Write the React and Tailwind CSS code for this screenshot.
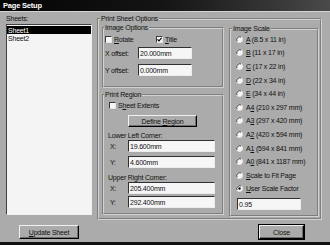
import { useState } from 'react'

function U({ children }) {
  return <span className="underline underline-offset-[1px]">{children}</span>
}

function Check({ checked, label }) {
  return (
    <span className="flex items-center gap-[2px]">
      <span className="w-[7px] h-[7px] bg-[#f6f6f6] border border-t-[#3a3a3a] border-l-[#3a3a3a] border-b-[#e4e4e4] border-r-[#e4e4e4] flex items-center justify-center">
        {checked && (
          <svg width="5" height="5" viewBox="0 0 5 5">
            <path d="M0.5 2.3 L2 3.8 L4.6 0.8" stroke="#000" strokeWidth="1.2" fill="none" />
          </svg>
        )}
      </span>
      <span>{label}</span>
    </span>
  )
}

function Radio({ checked, children }) {
  return (
    <div className="h-[13.6px] flex items-center gap-[3px] pl-[5px]">
      <svg width="7" height="7" viewBox="0 0 7 7" className="shrink-0">
        <circle cx="3.5" cy="3.5" r="3" fill="#f6f6f6" stroke="#e8e8e8" strokeWidth="1" />
        <path d="M1 5 A3 3 0 0 1 5 1" stroke="#3a3a3a" strokeWidth="1" fill="none" />
        {checked && <circle cx="3.5" cy="3.5" r="1.2" fill="#000" />}
      </svg>
      <span>{children}</span>
    </div>
  )
}

function Field({ value, className }) {
  return (
    <div className={`h-[12px] bg-[#f6f6f6] border border-t-[#303030] border-l-[#303030] border-b-[#ececec] border-r-[#ececec] flex items-center pl-[1px] ${className}`}>
      {value}
    </div>
  )
}

function Btn({ children, className }) {
  return (
    <div className={`flex items-center justify-center border border-t-[#f0f0f0] border-l-[#f0f0f0] border-b-black border-r-black shadow-[inset_-1px_-1px_0_#6e6e6e] ${className}`}>
      {children}
    </div>
  )
}

const scales = [
  [<U key="a">A</U>, ' (8.5 x 11 in)'],
  [<U key="b">B</U>, ' (11 x 17 in)'],
  [<U key="c">C</U>, ' (17 x 22 in)'],
  [<U key="d">D</U>, ' (22 x 34 in)'],
  [<U key="e">E</U>, ' (34 x 44 in)'],
  [<>A<U>4</U></>, ' (210 x 297 mm)'],
  [<>A<U>3</U></>, ' (297 x 420 mm)'],
  [<>A<U>2</U></>, ' (420 x 594 mm)'],
  [<>A<U>1</U></>, ' (594 x 841 mm)'],
  [<>A<U>0</U></>, ' (841 x 1187 mm)'],
]

export default function App() {
  const [sheet] = useState(0)
  const group = 'border-2 [border-style:groove] border-[#d2d2d2] min-w-0'

  return (
    <div className="w-[330px] h-[245px] bg-[#ababab] flex flex-col overflow-hidden border-b-[3px] border-[#111] font-['Liberation_Sans',Arial,sans-serif] text-[7px] tracking-[-0.2px] leading-[7px] text-[#111]">
      <div className="h-[11px] shrink-0 bg-gradient-to-r from-[#050505] via-[#151515] to-[#4a4a4a] text-white font-bold text-[7.5px] flex items-center pl-[3px]">
        Page Setup
      </div>
      <div className="h-px shrink-0 bg-[#d4d4d4]" />
      <div className="flex flex-1 min-h-0">
        <div className="w-[95px] shrink-0 pl-[6px] flex flex-col">
          <div className="pt-[3px]">Sheets:</div>
          <div className="mt-[2px] h-[191px] w-[86px] bg-[#f4f4f4] border border-t-[#404040] border-l-[#404040] border-b-[#f0f0f0] border-r-[#f0f0f0] pt-[1px]">
            {['Sheet1', 'Sheet2'].map((s, i) => (
              <div key={s} className={`h-[8px] flex items-center pl-[1px] ${i === sheet ? 'bg-black text-white' : ''}`}>
                {s}
              </div>
            ))}
          </div>
          <Btn className="mt-[10px] ml-[13px] w-[60px] h-[14px]">
            <span><U>U</U>pdate Sheet</span>
          </Btn>
        </div>

        <div className="flex-1 pl-[2px] flex flex-col">
          <fieldset className={`${group} mt-[3px] w-[225px] h-[205px] flex`}>
            <legend className="px-[1px] ml-[1px]">Print Sheet Options</legend>
            <div className="flex gap-[5px] ml-[3px]">
              <div className="w-[122px] flex flex-col">
                <fieldset className={`${group} mt-[2px] h-[64px]`}>
                  <legend className="px-[1px]">Image Options</legend>
                  <div className="mt-[4px] h-[8px] flex items-center pl-[1px]">
                    <div className="w-[51px]"><Check label={<><U>R</U>otate</>} /></div>
                    <Check checked label={<><U>T</U>itle</>} />
                  </div>
                  <div className="mt-[4px] flex items-center">
                    <span className="w-[34px] pl-[1px]">X offset:</span>
                    <Field value="20.000mm" className="w-[54px]" />
                  </div>
                  <div className="mt-[5px] flex items-center">
                    <span className="w-[34px] pl-[1px]">Y offset:</span>
                    <Field value="0.000mm" className="w-[54px]" />
                  </div>
                </fieldset>
                <fieldset className={`${group} mt-[3px] h-[124px]`}>
                  <legend className="px-[1px]">Print Region</legend>
                  <div className="mt-[3px] h-[8px] flex items-center pl-[5px]">
                    <Check label={<>S<U>h</U>eet Extents</>} />
                  </div>
                  <Btn className="mt-[6px] ml-[24px] w-[69px] h-[12px]">
                    <span>Define <U>R</U>egion</span>
                  </Btn>
                  <div className="mt-[5px] pl-[4px]">Lower Left Corner:</div>
                  <div className="mt-[1px] flex items-center">
                    <span className="w-[24px] pl-[6px]">X:</span>
                    <Field value="19.600mm" className="w-[87px]" />
                  </div>
                  <div className="mt-[4px] flex items-center">
                    <span className="w-[24px] pl-[6px]">Y:</span>
                    <Field value="4.600mm" className="w-[87px]" />
                  </div>
                  <div className="mt-[6px] pl-[4px]">Upper Right Corner:</div>
                  <div className="mt-[1px] flex items-center">
                    <span className="w-[24px] pl-[6px]">X:</span>
                    <Field value="205.400mm" className="w-[87px]" />
                  </div>
                  <div className="mt-[2px] flex items-center">
                    <span className="w-[24px] pl-[6px]">Y:</span>
                    <Field value="292.400mm" className="w-[87px]" />
                  </div>
                </fieldset>
              </div>

              <fieldset className={`${group} mt-[3px] w-[90px] h-[192px]`}>
                <legend className="px-[1px] ml-[1px]">Image Scale</legend>
                <div className="pt-[0.5px]">
                  {scales.map(([a, b], i) => (
                    <Radio key={i}>{a}{b}</Radio>
                  ))}
                  <Radio><U>S</U>cale to Fit Page</Radio>
                  <Radio checked><U>U</U>ser Scale Factor</Radio>
                  <Field value="0.95" className="mt-[2.5px] ml-[6px] w-[64px] h-[11px]" />
                </div>
              </fieldset>
            </div>
          </fieldset>
          <Btn className="self-end mr-[26px] mt-[5px] w-[45px] h-[14px] outline outline-1 outline-black">
            Close
          </Btn>
        </div>
      </div>
    </div>
  )
}
